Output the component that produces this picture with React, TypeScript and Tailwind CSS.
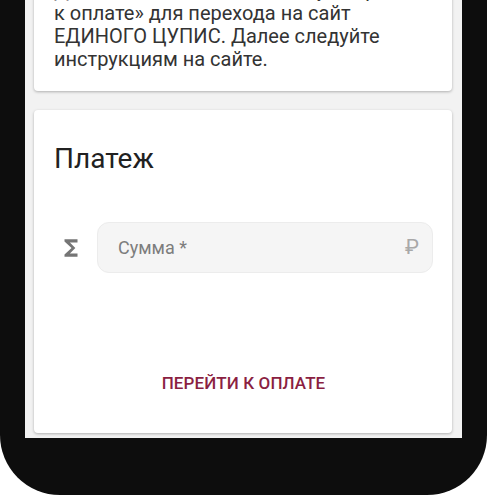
import React from "react"

function SigmaIcon() {
  return (
    <svg viewBox="0 0 24 24" className="h-[26px] w-[26px]" fill="#757575">
      <path d="M18 4H6v2l6.5 6L6 18v2h12v-3h-7l5-5-5-5h7z" />
    </svg>
  )
}

export default function App() {
  return (
    <div className="w-[487px] h-[495px] bg-white overflow-hidden font-['Roboto',sans-serif]">
      <div className="h-full bg-[#0d0d0d] rounded-b-[60px] px-[25px] pb-[57px]">
        {/* экран, прокрученный к низу */}
        <div className="h-[438px] bg-[#f2f2f2] flex flex-col justify-end overflow-hidden pl-[9px] pr-[10px] pb-[5px]">
          <div className="shrink-0 bg-white rounded-[4px] shadow-[0_1px_3px_rgba(0,0,0,0.28)] p-5">
            <p className="text-[20px] leading-[23px] text-[#333]">
              Для оплаты нажмите кнопку «Перейти
              <br />
              к оплате» для перехода на сайт
              <br />
              ЕДИНОГО ЦУПИС. Далее следуйте
              <br />
              инструкциям на сайте.
            </p>
          </div>

          <div className="shrink-0 mt-[19px] bg-white rounded-[4px] shadow-[0_1px_3px_rgba(0,0,0,0.28)] pt-[33px] pb-[40px] pl-5 pr-[19px]">
            <h2 className="text-[28px] leading-[32px] text-[#212121]">Платеж</h2>

            <div className="mt-[47px] flex items-center">
              <div className="ml-[4px] mr-[13px] flex items-center">
                <SigmaIcon />
              </div>
              <div className="flex-1 h-[51px] rounded-[12px] bg-[#f5f5f5] border border-[#ececec] flex items-center pl-5 pr-[13px]">
                <span className="text-[18px] text-[#7d7d7d]">Сумма *</span>
                <span className="ml-auto text-[21px] text-[#a8a8a8]">₽</span>
              </div>
            </div>

            <div className="mt-[100px] flex justify-center">
              <button className="text-[17px] leading-[20px] font-medium tracking-[0.1px] text-[#8b1f42] uppercase">
                Перейти к оплате
              </button>
            </div>
          </div>
        </div>
      </div>
    </div>
  )
}
